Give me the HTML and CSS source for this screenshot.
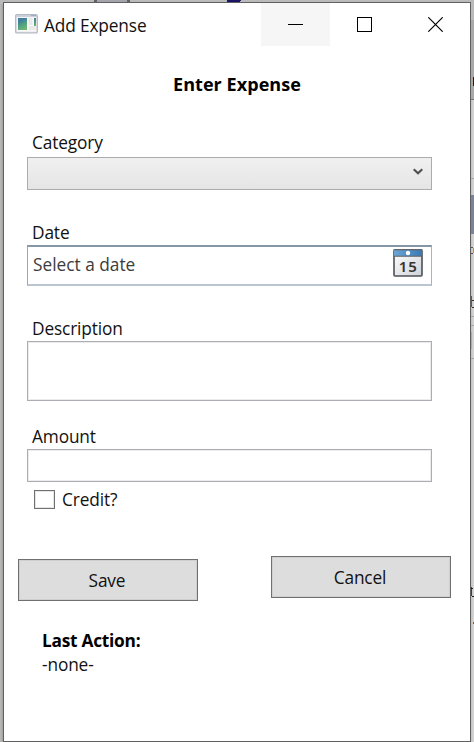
FILE: index.html
```html
<!DOCTYPE html>
<html lang="en">
<head>
<meta charset="utf-8">
<title>Add Expense</title>
<link rel="stylesheet" href="styles.css">
</head>
<body>
<svg class="desktop" width="474" height="742" viewBox="0 0 474 742" shape-rendering="crispEdges" aria-hidden="true">
  <defs>
    <linearGradient id="edge"><stop offset="0" stop-color="#bcbcba"/><stop offset="1" stop-color="#a2a2a0"/></linearGradient>
    <linearGradient id="side"><stop offset="0" stop-color="#c2c2c2"/><stop offset="1" stop-color="#d8d8d8"/></linearGradient>
  </defs>
  <path fill="#bababa" d="M0 0h474v742H0z"/>
  <path fill="url(#edge)" d="M0 4h3v738H0z"/>
  <path fill="#626266" d="M94 0h36v2H94z"/><path fill="#a4a4ac" d="M97 0h30v2H97z"/>
  <path fill="#1b1464" d="M227 0h14l-1 2h-13z"/>
  <path fill="#a9a9a9" d="M471 20h3v79h-3z"/>
  <path fill="#777" d="M471 99h3v1h-3z"/>
  <path fill="url(#side)" d="M471 100h3v642h-3z"/>
  <path fill="#3d1706" d="M473 77h1v9h-1z"/>
  <path fill="#aaa" d="M471 178h3v1h-3zM471 316h3v1h-3zM471 325h3v1h-3zM471 358h3v1h-3z"/>
  <path fill="#7b839c" d="M471 195h3v39h-3z"/>
  <path fill="#555" d="M471 247h2v1h-2zM471 253h2v1h-2z"/><path fill="#c98d38" d="M473 248h1v5h-1z"/>
  <path fill="#286698" d="M471 296h1v11h-1z"/><path fill="#443028" d="M472 300h2v1h-2zM472 307h2v1h-2z"/>
  <path fill="#d7ad35" d="M471 332h1v17h-1z"/>
  <path fill="#174b80" d="M471 587h1v9h-1z"/><path fill="#222" d="M471 588h2v1h-2zM472 596h2v1h-2z"/>
  <path fill="#865325" d="M473 622h1v2h-1z"/>
</svg>
<main class="window">
  <header class="titlebar">
    <svg class="app-icon" width="23" height="20" viewBox="0 0 23 20" aria-hidden="true">
      <defs><linearGradient id="pane" x2=".4" y2="1"><stop stop-color="#4179a5"/><stop offset=".5" stop-color="#489687"/><stop offset="1" stop-color="#69b575"/></linearGradient></defs>
      <rect x=".7" y=".7" width="21.6" height="18.2" rx="1" fill="#f0f0f1" stroke="#b4b9c1" stroke-width="1.3"/>
      <path d="M1 2h21" stroke="#c5cbd6" stroke-width="1.6"/>
      <path d="M16 1.6h5" stroke="#98a9c2"/>
      <path d="M2.5 3.8h18v13h-18z" fill="#fafafa"/>
      <path d="M3 4h9v12H3z" fill="url(#pane)"/>
      <path d="M3 10q5-1 9-5v-1H3z" fill="#3f7ba2" opacity=".45"/>
      <path d="M13.5 4h4v7h-4zM13.5 12h7v4h-7z" fill="#e9e9e8"/>
      <path d="M19 4h2v8h-2z" fill="url(#pane)"/>
    </svg>
    <span class="title">Add Expense</span>
    <div class="controls">
      <button class="control hovered" aria-label="Minimize"><svg width="15" height="15" shape-rendering="crispEdges"><path d="M0 7h15v1H0z"/></svg></button>
      <button class="control maximize" aria-label="Maximize"><svg width="15" height="15" shape-rendering="crispEdges"><path d="M.5.5h14v14H.5z" fill="none" stroke="#000"/></svg></button>
      <button class="control close" aria-label="Close"><svg width="15" height="15"><path d="M.3.3l14.4 14.4M14.7.3L.3 14.7" fill="none" stroke="#000" stroke-width="1.15"/></svg></button>
    </div>
  </header>
  <h1 class="heading"><span>Enter Expense</span></h1>
  <form class="form">
    <div class="field category">
      <span class="label">Category</span>
      <div class="box combo"><svg width="10" height="8" viewBox="0 0 10 8"><path d="M.7 1.2L5 5.2l4.3-4" fill="none" stroke="#505050" stroke-width="2.2"/></svg></div>
    </div>
    <div class="field date">
      <span class="label">Date</span>
      <div class="box picker"><span class="placeholder">Select a date</span>
        <svg class="calendar" width="30" height="28" viewBox="0 0 30 28">
          <defs><linearGradient id="sky"><stop stop-color="#6ca5d4"/><stop offset="1" stop-color="#3978b4"/></linearGradient><linearGradient id="sheet" x2="1" y2="1"><stop stop-color="#fff"/><stop offset="1" stop-color="#cfd2d8"/></linearGradient></defs>
          <rect x="1" y="1" width="28" height="26" rx="1" fill="url(#sheet)" stroke="#4d5057" stroke-width="1.6"/>
          <path d="M1 1h28v6H1z" fill="url(#sky)"/><path d="M.5 .7h29M1 7.3h28" stroke="#5b5f66" stroke-width="1.1"/>
          <circle cx="15" cy="4" r="2.2" fill="#fff"/>
          <text class="day" x="15.3" y="23" text-anchor="middle">15</text>
        </svg>
      </div>
    </div>
    <div class="field description">
      <span class="label">Description</span>
      <div class="box area"></div>
    </div>
    <div class="field amount">
      <span class="label">Amount</span>
      <div class="box"></div>
    </div>
    <div class="check"><span class="checkbox"></span><span class="credit">Credit?</span></div>
  </form>
  <div class="actions">
    <button class="button save"><span>Save</span></button>
    <button class="button cancel"><span>Cancel</span></button>
  </div>
  <section class="status"><strong>Last Action:</strong><span class="none">-none-</span></section>
</main>
</body>
</html>
```
FILE: styles.css
```css
* { box-sizing: border-box; }
body { margin: 0; width: 474px; height: 742px; overflow: hidden; background: #bababa; color: #111; font: 400 17.3px/24px "Open Sans", "Noto Sans", sans-serif; letter-spacing: -.14px; }
svg { display: block; flex: none; }
button { font: inherit; letter-spacing: inherit; color: inherit; padding: 0; border: 0; }
.desktop { position: absolute; inset: 0; z-index: -1; }
.window { width: 468px; height: 740px; margin: 2px 0 0 3px; background: #fff; border: 1px solid #606060; overflow: hidden; }
.titlebar { display: flex; height: 43px; align-items: flex-start; }
.app-icon { margin: 11px 0 0 11px; }
.title { margin: 11px 0 0 6px; white-space: nowrap; }
.controls { display: flex; margin-left: auto; }
.control { display: flex; width: 69px; height: 43px; justify-content: center; padding-top: 14px; background: transparent; }
.hovered { background: #f6f6f6; }
.close { width: 71px; padding-left: 1px; }
.heading { margin: 26px 0 0; padding-left: 169px; font-size: 18px; line-height: 24px; letter-spacing: .06px; color: #000; }
.form { padding: 35px 0 0 23px; }
.field { width: 405px; }
.label { display: block; height: 26px; padding-left: 5px; }
.box { height: 33px; border: 1px solid #abadb3; box-shadow: inset 0 0 0 1px #ececef; background: #fff; }
.combo { display: flex; justify-content: flex-end; padding: 10px 8px 0 0; border-color: #acacac; background: linear-gradient(#f0f0f0, #e5e5e5); box-shadow: none; }
.date { margin-top: 31px; }
.date .label { height: 24px; }
.picker { display: flex; justify-content: space-between; height: 41px; border: solid; border-width: 2px 1px 2px 1px; border-color: #8796a5 #a8b3be #bac5d0 #9aa7b3; box-shadow: none; padding: 2px 8px 0 5px; }
.placeholder { color: #3c3c3c; margin-top: 4px; letter-spacing: 0; }
.day { font: 600 15px "Noto Sans", sans-serif; fill: #333; letter-spacing: 1px; }
.description { margin-top: 31px; }
.description .label { height: 24px; }
.area { height: 60px; }
.amount { margin-top: 24px; }
.amount .label { height: 24px; }
.check { display: flex; align-items: center; height: 24px; margin-top: 6px; padding-left: 7px; }
.checkbox { width: 21px; height: 19px; border: 1px solid #707070; box-shadow: inset 0 0 0 1px #e6e6e6; margin: -1px 7px 0 0; }
.actions { display: flex; justify-content: space-between; margin-top: 44px; padding: 0 19px 0 14px; }
.button { display: flex; align-items: center; justify-content: center; width: 180px; height: 42px; background: #ddd; border: 1px solid #707070; box-shadow: inset 0 0 0 1px #cfcfcf; }
.button span { margin-left: -2px; padding-top: 1px; }
.save { margin-top: 3px; }
.status { display: flex; flex-direction: column; align-items: flex-start; margin: 28px 0 0 38px; }
.status strong { letter-spacing: -.25px; color: #000; }
```
